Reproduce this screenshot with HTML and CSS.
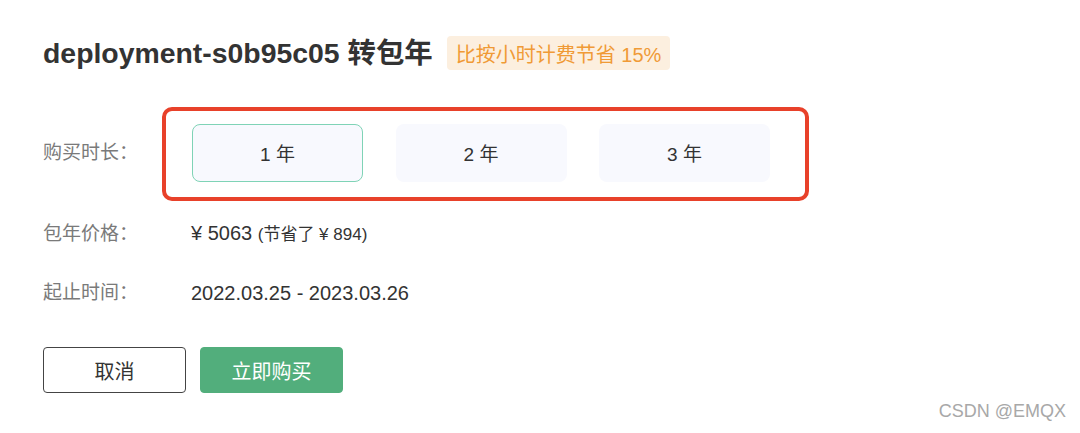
FILE: index.html
```html
<!DOCTYPE html>
<html lang="zh">
<head>
<meta charset="utf-8">
<link rel="stylesheet" href="styles.css">
</head>
<body>
<div class="page">
  <div class="header">
    <h1 class="title">deployment-s0b95c05 转包年</h1>
    <span class="badge">比按小时计费节省 15%</span>
  </div>
  <div class="row row-duration">
    <div class="label">购买时长：</div>
    <div class="options">
      <div class="option active">1 年</div>
      <div class="option">2 年</div>
      <div class="option">3 年</div>
    </div>
  </div>
  <div class="row row-price">
    <div class="label">包年价格：</div>
    <div class="value">¥ 5063 <span class="small">(节省了 ¥ 894)</span></div>
  </div>
  <div class="row row-time">
    <div class="label">起止时间：</div>
    <div class="value">2022.03.25 - 2023.03.26</div>
  </div>
  <div class="actions">
    <button class="btn btn-cancel">取消</button>
    <button class="btn btn-buy">立即购买</button>
  </div>
</div>
<div class="watermark">CSDN @EMQX</div>
</body>
</html>
```

FILE: styles.css
```css
html, body {
  margin: 0;
  padding: 0;
  background: #ffffff;
}
body {
  width: 1080px;
  height: 433px;
  position: relative;
  overflow: hidden;
  font-family: "Liberation Sans", "Noto Sans CJK SC", sans-serif;
  color: #333333;
}
.page {
  padding: 36px 0 0 43px;
}
.header {
  display: flex;
  align-items: center;
  gap: 14px;
  height: 34px;
}
.title {
  margin: 0;
  font-size: 28.4px;
  font-weight: bold;
  color: #333333;
  line-height: 34px;
  white-space: nowrap;
}
.badge {
  display: inline-flex;
  align-items: center;
  height: 34px;
  padding: 0 9px;
  border-radius: 4px;
  background: #fcefdf;
  color: #f09a36;
  font-size: 20px;
  white-space: nowrap;
}
.row {
  display: flex;
  align-items: center;
}
.label {
  color: #7a7a7a;
  font-size: 19px;
  line-height: 24px;
}
.row-duration {
  margin-top: 37px;
}
.row-duration .label {
  width: 119px;
  margin-bottom: 3px;
}
.options {
  display: flex;
  gap: 32.5px;
  border: 4px solid #e8412a;
  border-radius: 10px;
  padding: 13px 35px 15px 26px;
}
.option {
  width: 171px;
  height: 58px;
  box-sizing: border-box;
  border-radius: 8px;
  background: #f8f9fe;
  display: flex;
  align-items: center;
  justify-content: center;
  padding-bottom: 2px;
  font-size: 19px;
  color: #333333;
  border: 1px solid transparent;
}
.option.active {
  border-color: #7fd3b6;
}
.row-price {
  margin-top: 20px;
}
.row-time {
  margin-top: 34px;
}
.row-price .label,
.row-time .label {
  width: 148px;
}
.value {
  font-size: 20px;
  line-height: 24px;
  color: #333333;
}
.small {
  font-size: 17px;
}
.actions {
  display: flex;
  gap: 14px;
  margin-top: 42px;
}
.btn {
  width: 143px;
  height: 46px;
  box-sizing: border-box;
  border-radius: 4px;
  font-family: "Liberation Sans", "Noto Sans CJK SC", sans-serif;
  font-size: 20px;
  cursor: pointer;
}
.btn-cancel {
  background: #ffffff;
  border: 1px solid #444444;
  color: #333333;
}
.btn-buy {
  background: #52ae7c;
  border: 1px solid #52ae7c;
  color: #ffffff;
}
.watermark {
  position: absolute;
  right: 14px;
  bottom: 11px;
  font-size: 18px;
  color: #a8a8a8;
}
```
